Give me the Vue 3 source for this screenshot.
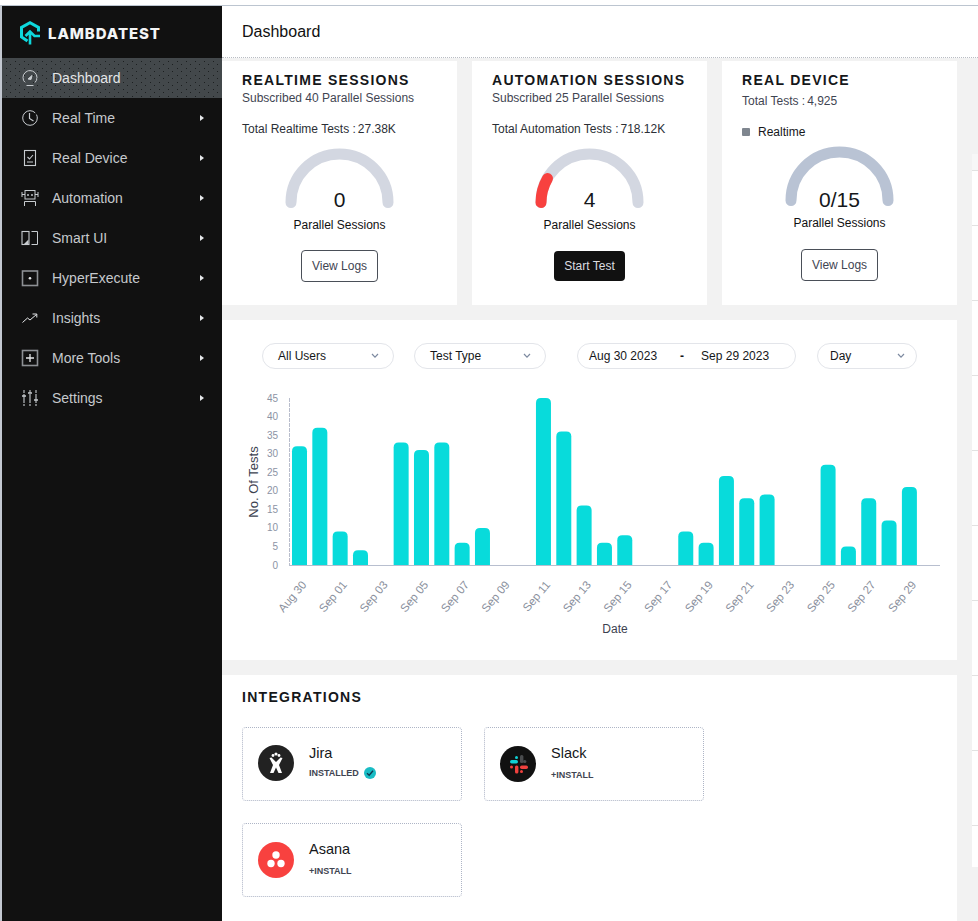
<script setup>
const menu = [
  { label: 'Dashboard', icon: 'gauge', active: true },
  { label: 'Real Time', icon: 'clock', arrow: true },
  { label: 'Real Device', icon: 'device', arrow: true },
  { label: 'Automation', icon: 'robot', arrow: true },
  { label: 'Smart UI', icon: 'smart', arrow: true },
  { label: 'HyperExecute', icon: 'hyper', arrow: true },
  { label: 'Insights', icon: 'trend', arrow: true },
  { label: 'More Tools', icon: 'plus', arrow: true },
  { label: 'Settings', icon: 'sliders', arrow: true }
]

const sessions = [
  { title: 'REALTIME SESSIONS', sub: 'Subscribed 40 Parallel Sessions', total: 'Total Realtime Tests :', num: '27.38K', value: '0', button: 'View Logs' },
  { title: 'AUTOMATION SESSIONS', sub: 'Subscribed 25 Parallel Sessions', total: 'Total Automation Tests :', num: '718.12K', value: '4', button: 'Start Test', primary: true, progress: true }
]

const filters = [
  { label: 'All Users', cls: 'f-user' },
  { label: 'Test Type', cls: 'f-type' }
]

const values = [32, 37, 9, 4, 0, 33, 31, 33, 6, 10, 0, 0, 45, 36, 16, 6, 8, 0, 0, 9, 6, 24, 18, 19, 0, 0, 27, 5, 18, 12, 21]
const pitch = 20.33
const unit = 167 / 45
const baseY = 185
const bars = values.map((v, i) => {
  const h = v * unit
  const x = 70 + i * pitch
  const top = baseY - h
  const r = Math.min(5, h)
  return {
    key: i,
    d: `M${x} ${baseY}V${top + r}Q${x} ${top} ${x + r} ${top}H${x + 15 - r}Q${x + 15} ${top} ${x + 15} ${top + r}V${baseY}Z`,
    show: v > 0
  }
})
const ticks = [0, 5, 10, 15, 20, 25, 30, 35, 40, 45].map(t => ({ t, y: baseY - t * unit + 3.5 }))
const dates = ['Aug 30', 'Sep 01', 'Sep 03', 'Sep 05', 'Sep 07', 'Sep 09', 'Sep 11', 'Sep 13', 'Sep 15', 'Sep 17', 'Sep 19', 'Sep 21', 'Sep 23', 'Sep 25', 'Sep 27', 'Sep 29']
const labels = dates.map((d, i) => ({ d, x: 85 + i * 2 * pitch, y: 205 }))
</script>

<template>
  <div class="page">
    <aside class="sidebar">
      <div class="logo">
        <svg width="24" height="24" viewBox="0 0 24 24" fill="none" stroke="#0ed8dc" stroke-width="3">
          <path d="M9.5 20 L3.5 16 V6.5 L12 1.8 L20.5 6.5 V10.5" />
          <path d="M12 23.5 V11 M7.5 15 L12 10.5 L16.5 15 H22" stroke-width="2.6" />
        </svg>
        <span>LAMBDATEST</span>
      </div>
      <nav class="menu">
        <a v-for="m in menu" :key="m.label" class="item" :class="{ active: m.active }">
          <span class="ico">
            <svg width="18" height="18" viewBox="0 0 18 18" fill="none" stroke="#c8ccd0" stroke-width="1">
              <template v-if="m.icon === 'gauge'">
                <path d="M4 13.5 A7 7 0 1 1 14 13.5" />
                <path d="M7 10 L11 6.5 L10 10.5 Z" fill="#c8ccd0" />
                <path d="M5.5 16.5 H12.5" />
              </template>
              <template v-else-if="m.icon === 'clock'">
                <circle cx="9" cy="9" r="7.3" stroke-dasharray="40 2 4 2" />
                <path d="M8.5 4 V9.5 L12.5 12" stroke-width="1.2" />
              </template>
              <template v-else-if="m.icon === 'device'">
                <rect x="3.5" y="1.5" width="11" height="15" stroke-width="1.1" />
                <path d="M6.5 8 L8.5 10 L12 6 M6 13 H12" stroke-width="1.1" />
              </template>
              <template v-else-if="m.icon === 'robot'">
                <rect x="4" y="1.5" width="10" height="8.5" />
                <path d="M1 3 V8 M17 3 V8 M1 5.5 H4 M14 5.5 H17 M3.5 17 V12.5 H14.5 V17" />
                <path d="M7 5 V7 M11 5 V7" stroke-width="1.4" />
              </template>
              <template v-else-if="m.icon === 'smart'">
                <rect x="1" y="2.5" width="7" height="13" stroke-width="1.1" />
                <path d="M10.5 2.5 H16.5 V15.5 H10.5" stroke-width="1" />
                <path d="M7.5 10.5 L3 15 H7.5 Z" fill="#c8ccd0" stroke="none" />
              </template>
              <template v-else-if="m.icon === 'hyper'">
                <rect x="1.5" y="2" width="15" height="14.5" stroke="#8d9094" stroke-width="1.6" />
                <circle cx="9" cy="9.2" r="1.3" fill="#e6e8ea" stroke="none" />
              </template>
              <template v-else-if="m.icon === 'trend'">
                <path d="M1.5 13.5 L6.5 9 L9 11 L15.5 5.5 M11.5 5 H15.8 V8.5" stroke="#e6e8ea" />
              </template>
              <template v-else-if="m.icon === 'plus'">
                <rect x="1.5" y="1.5" width="15" height="15" stroke="#8d9094" stroke-width="1.6" />
                <path d="M9 5 V13 M5 9 H13" stroke="#e6e8ea" stroke-width="1.3" />
              </template>
              <template v-else>
                <path d="M3 1 V17 M9 1 V17 M15 1 V17" stroke-dasharray="3 1 9 1 3" stroke-width="1.1" />
                <path d="M1 7 H5 M7 4 H11 M13 11 H17" stroke-width="1.4" />
              </template>
            </svg>
          </span>
          <span class="label">{{ m.label }}</span>
          <span v-if="m.arrow" class="arrow"></span>
        </a>
      </nav>
    </aside>

    <main class="main">
      <header class="topbar">Dashboard</header>

      <div class="body">
        <div class="content">
          <section class="cards">
            <article v-for="s in sessions" :key="s.title" class="card">
              <h2>{{ s.title }}</h2>
              <p class="sub">{{ s.sub }}</p>
              <p class="total">{{ s.total }}<span class="num">{{ s.num }}</span></p>
              <div class="gauge">
                <svg width="110" height="62" viewBox="0 0 110 62" fill="none" stroke-linecap="round" stroke-width="11">
                  <path d="M6 55.5 A48.5 48.5 0 0 1 103 55.5" stroke="#d3d7e1" />
                  <path v-if="s.progress" d="M6 55.5 A48.5 48.5 0 0 1 12.5 31.5" stroke="#f8413f" />
                </svg>
                <span class="gauge-val">{{ s.value }}</span>
              </div>
              <p class="gauge-cap">Parallel Sessions</p>
              <button class="btn" :class="{ primary: s.primary }">{{ s.button }}</button>
            </article>

            <article class="card device">
              <h2>REAL DEVICE</h2>
              <p class="sub">Total Tests :<span class="num">4,925</span></p>
              <p class="legend"><i></i>Realtime</p>
              <div class="gauge">
                <svg width="110" height="62" viewBox="0 0 110 62" fill="none" stroke-linecap="round" stroke-width="11">
                  <path d="M6 55.5 A48.5 48.5 0 0 1 103 55.5" stroke="#b9c3d4" />
                </svg>
                <span class="gauge-val">0/15</span>
              </div>
              <p class="gauge-cap">Parallel Sessions</p>
              <button class="btn">View Logs</button>
            </article>
          </section>

          <section class="chart-card">
            <div class="filters">
              <div v-for="f in filters" :key="f.label" class="pill" :class="f.cls">
                <span>{{ f.label }}</span>
                <svg class="chev" width="8" height="6" viewBox="0 0 8 6" fill="none" stroke="#7d8aa0" stroke-width="1.2"><path d="M1 1 L4 4.2 L7 1" /></svg>
              </div>
              <div class="pill f-date">
                <span>Aug 30 2023</span>
                <b>-</b>
                <span>Sep 29 2023</span>
              </div>
              <div class="pill f-day">
                <span>Day</span>
                <svg class="chev" width="8" height="6" viewBox="0 0 8 6" fill="none" stroke="#7d8aa0" stroke-width="1.2"><path d="M1 1 L4 4.2 L7 1" /></svg>
              </div>
            </div>

            <svg class="chart" width="735" height="260" viewBox="0 0 735 260">
              <g font-family="'Liberation Sans', Arial, sans-serif">
                <path d="M67.5 18 V185" stroke="#b8bdcc" stroke-dasharray="4 1" fill="none" />
                <path d="M67 185.5 H718" stroke="#b8bfcf" fill="none" />
                <text v-for="t in ticks" :key="t.t" x="56" :y="t.y" text-anchor="end" font-size="10" fill="#8b93a4">{{ t.t }}</text>
                <path v-for="b in bars" v-show="b.show" :key="b.key" :d="b.d" fill="#08dbdb" />
                <text v-for="l in labels" :key="l.d" :x="l.x" :y="l.y" text-anchor="end" font-size="11.5" fill="#8a909d" :transform="`rotate(-50 ${l.x} ${l.y})`">{{ l.d }}</text>
                <text transform="translate(36 102) rotate(-90)" text-anchor="middle" font-size="13" fill="#3c4250">No. Of Tests</text>
                <text x="393" y="253" text-anchor="middle" font-size="12" fill="#3c4250">Date</text>
              </g>
            </svg>
          </section>

          <section class="integrations">
            <h2>INTEGRATIONS</h2>
            <div class="int-grid">
              <div class="int">
                <span class="badge jira">
                  <svg width="36" height="36" viewBox="0 0 36 36" fill="#fff">
                    <circle cx="15" cy="10.5" r="1.4" /><circle cx="21" cy="10.5" r="1.4" /><circle cx="18" cy="9" r="1.6" />
                    <path d="M11.5 13 L13.5 12.5 L18 17 L22.5 12.5 L24.5 13 L21 20 L24 28 L20.5 28 L18 22.5 L15.5 28 L12 28 L15 20 Z" />
                  </svg>
                </span>
                <div class="int-text">
                  <div class="int-name">Jira</div>
                  <div class="int-state">INSTALLED
                    <svg width="12" height="12" viewBox="0 0 12 12"><circle cx="6" cy="6" r="6" fill="#19bcc4" /><path d="M3 6.2 L5.2 8.2 L9 3.8" stroke="#103a50" stroke-width="1.4" fill="none" /></svg>
                  </div>
                </div>
              </div>
              <div class="int">
                <span class="badge slack">
                  <svg width="36" height="36" viewBox="0 0 36 36">
                    <g fill="#0fd0d5"><rect x="10" y="14" width="8" height="3.4" rx="1.7" /><rect x="15" y="10" width="3" height="3" rx="1.5" /></g>
                    <g fill="#4a4c4e"><rect x="20" y="9" width="3.4" height="8" rx="1.5" /><rect x="23" y="14" width="3.4" height="3" rx="1.5" /></g>
                    <g fill="#f0413e"><rect x="15" y="19.5" width="3.4" height="8" rx="1.6" /><rect x="10" y="19.5" width="3" height="3" rx="1.5" /><rect x="20" y="19.5" width="8" height="3.4" rx="1.7" /><rect x="20" y="24" width="3" height="3" rx="1.5" /></g>
                  </svg>
                </span>
                <div class="int-text">
                  <div class="int-name">Slack</div>
                  <div class="int-state install">+INSTALL</div>
                </div>
              </div>
              <div class="int">
                <span class="badge asana">
                  <svg width="36" height="36" viewBox="0 0 36 36" fill="#fff">
                    <circle cx="18" cy="13" r="3.7" /><circle cx="13" cy="21.5" r="3.7" /><circle cx="23" cy="21.5" r="3.7" />
                  </svg>
                </span>
                <div class="int-text">
                  <div class="int-name">Asana</div>
                  <div class="int-state install">+INSTALL</div>
                </div>
              </div>
            </div>
          </section>
        </div>
        <div class="rail"></div>
      </div>
    </main>
  </div>
</template>

<style scoped>
* {
  box-sizing: border-box;
}

.page {
  display: flex;
  width: 978px;
  height: 921px;
  overflow: hidden;
  padding-top: 5px;
  background: #fff;
  font-family: "Liberation Sans", Arial, sans-serif;
  color: #111;
}

.sidebar {
  width: 222px;
  flex: none;
  background: #111;
  border-left: 2px solid #c3c8d1;
  border-top: 1px solid #bcc5d0;
}

.logo {
  display: flex;
  align-items: center;
  gap: 6px;
  height: 52px;
  padding: 2px 0 0 16px;
}
.logo span {
  font-family: Inter, sans-serif;
  font-weight: 800;
  font-size: 15px;
  letter-spacing: 0.9px;
  color: #f4f5f6;
}

.item {
  display: flex;
  align-items: center;
  height: 40px;
  padding-left: 19px;
  font-size: 14px;
  color: #c6c9cd;
}
.item.active {
  color: #e4e6e8;
  background-color: #43484b;
  background-image: radial-gradient(#1c1f20 0.6px, transparent 0.8px), radial-gradient(#1c1f20 0.6px, transparent 0.8px);
  background-size: 9px 7px;
  background-position: 0 0, 4px 3px;
}
.ico {
  display: flex;
  width: 18px;
  height: 18px;
  margin-right: 13px;
}
.label {
  flex: 1;
}
.arrow {
  width: 0;
  height: 0;
  margin-right: 18px;
  border-left: 4px solid #e6e8ea;
  border-top: 3.5px solid transparent;
  border-bottom: 3.5px solid transparent;
}

.main {
  flex: 1;
  display: flex;
  flex-direction: column;
  min-width: 0;
  border-top: 1px solid #bcc5d0;
}

.topbar {
  height: 52px;
  flex: none;
  padding: 16px 0 0 20px;
  font-size: 16px;
  line-height: 20px;
  background: #fff;
  border-bottom: 1px dotted #b9bdc4;
}

.body {
  flex: 1;
  display: flex;
  background: #f2f2f2;
  min-height: 0;
}
.content {
  width: 735px;
  flex: none;
  padding-top: 3px;
}
/* next column peeking in at the right edge */
.rail {
  width: 6px;
  height: 713px;
  margin-left: 15px;
  margin-top: 96px;
  background:
    repeating-linear-gradient(to bottom, #e2e2e2 0 1px, transparent 1px 75px) 0 71px no-repeat,
    linear-gradient(to bottom, #f7f7f7 0 16px, #e2e2e2 16px 17px, #fff 17px);
}

.cards {
  display: flex;
  gap: 15px;
  margin-bottom: 15px;
}
.card {
  width: 235px;
  height: 244px;
  padding: 11px 20px 0;
  background: #fff;
  text-align: center;
}
h2 {
  margin: 0;
  font-size: 14px;
  line-height: 16px;
  font-weight: 700;
  letter-spacing: 1.28px;
  white-space: nowrap;
  text-align: left;
  color: #15171a;
}
.sub {
  margin: 2px 0 0;
  font-size: 12px;
  line-height: 16px;
  text-align: left;
  color: #3f4552;
}
.total {
  margin: 15px 0 0;
  font-size: 12px;
  line-height: 16px;
  text-align: left;
  color: #2b2f36;
}
.num {
  margin-left: 2px;
}
.gauge {
  position: relative;
  width: 110px;
  height: 62px;
  margin: 10px auto 0;
}
.gauge svg {
  display: block;
}
.gauge-val {
  position: absolute;
  left: 0;
  right: 0;
  bottom: -4px;
  font-size: 21px;
  line-height: 26px;
  color: #15171a;
}
.gauge-cap {
  margin: 8px 0 0;
  font-size: 12px;
  line-height: 16px;
  color: #111;
}
.btn {
  display: block;
  width: 77px;
  height: 32px;
  margin: 17px auto 0;
  padding: 0;
  border: 1px solid #4a4f58;
  border-radius: 4px;
  background: #fff;
  font: 12px "Liberation Sans", Arial, sans-serif;
  color: #3f4552;
}
.btn.primary {
  width: 71px;
  height: 30px;
  margin-top: 18px;
  border: 0;
  background: #111;
  color: #dcdde0;
}
.device .sub {
  margin-top: 5px;
}
.legend {
  display: flex;
  align-items: center;
  margin: 15px 0 0;
  font-size: 12px;
  line-height: 16px;
  text-align: left;
  color: #15171a;
}
.legend i {
  width: 8px;
  height: 8px;
  margin-right: 8px;
  border-radius: 1px;
  background: #7f868f;
}
.device .gauge {
  margin-top: 5px;
}
.device .gauge-val {
  bottom: -6px;
}
.device .gauge-cap {
  margin-top: 8px;
}
.device .btn {
  margin-top: 18px;
}

.chart-card {
  height: 340px;
  margin-bottom: 15px;
  background: #fff;
  padding-top: 23px;
}
.filters {
  display: flex;
  padding-left: 40px;
}
.pill {
  display: flex;
  align-items: center;
  height: 26px;
  padding: 0 15px;
  border: 1px solid #e3e5ea;
  border-radius: 13px;
  font-size: 12px;
  color: #15171a;
}
.f-user {
  width: 132px;
  justify-content: space-between;
  padding-right: 14px;
  margin-right: 20px;
}
.f-type {
  width: 132px;
  justify-content: space-between;
  padding-right: 14px;
  margin-right: 31px;
}
.f-date {
  width: 219px;
  padding-left: 11px;
  margin-right: 21px;
}
.f-date b {
  margin: 0 17px 0 23px;
  font-weight: 700;
}
.f-day {
  width: 100px;
  justify-content: space-between;
  padding-left: 12px;
  padding-right: 11px;
}
.chev {
  flex: none;
}
.chart {
  display: block;
  margin-top: 11px;
  overflow: visible;
}

.integrations {
  height: 300px;
  padding: 14px 20px 0;
  background: #fff;
}
.int-grid {
  display: grid;
  grid-template-columns: 220px 220px;
  gap: 22px;
  margin-top: 22px;
}
.int {
  display: flex;
  align-items: center;
  gap: 15px;
  height: 74px;
  padding-left: 15px;
  border: 1px dotted #aeb5c6;
  border-radius: 4px;
}
.int:first-child {
  padding-bottom: 2px;
}
.badge {
  display: block;
  width: 36px;
  height: 36px;
  border-radius: 50%;
  flex: none;
}
.badge svg {
  display: block;
}
.jira { background: #222; }
.slack { background: #111; }
.asana { background: #f8413f; }
.int-text {
  margin-bottom: 4px;
}
.int-name {
  font-size: 14.5px;
  line-height: 18px;
  color: #15171a;
}
.int-state {
  display: flex;
  align-items: center;
  gap: 5px;
  margin-top: 5px;
  height: 12px;
  font-size: 9px;
  font-weight: 700;
  color: #3f4552;
}
.int-state.install {
  margin-top: 7px;
}
</style>

<style>
html, body {
  margin: 0;
  background: #fff;
}
</style>
